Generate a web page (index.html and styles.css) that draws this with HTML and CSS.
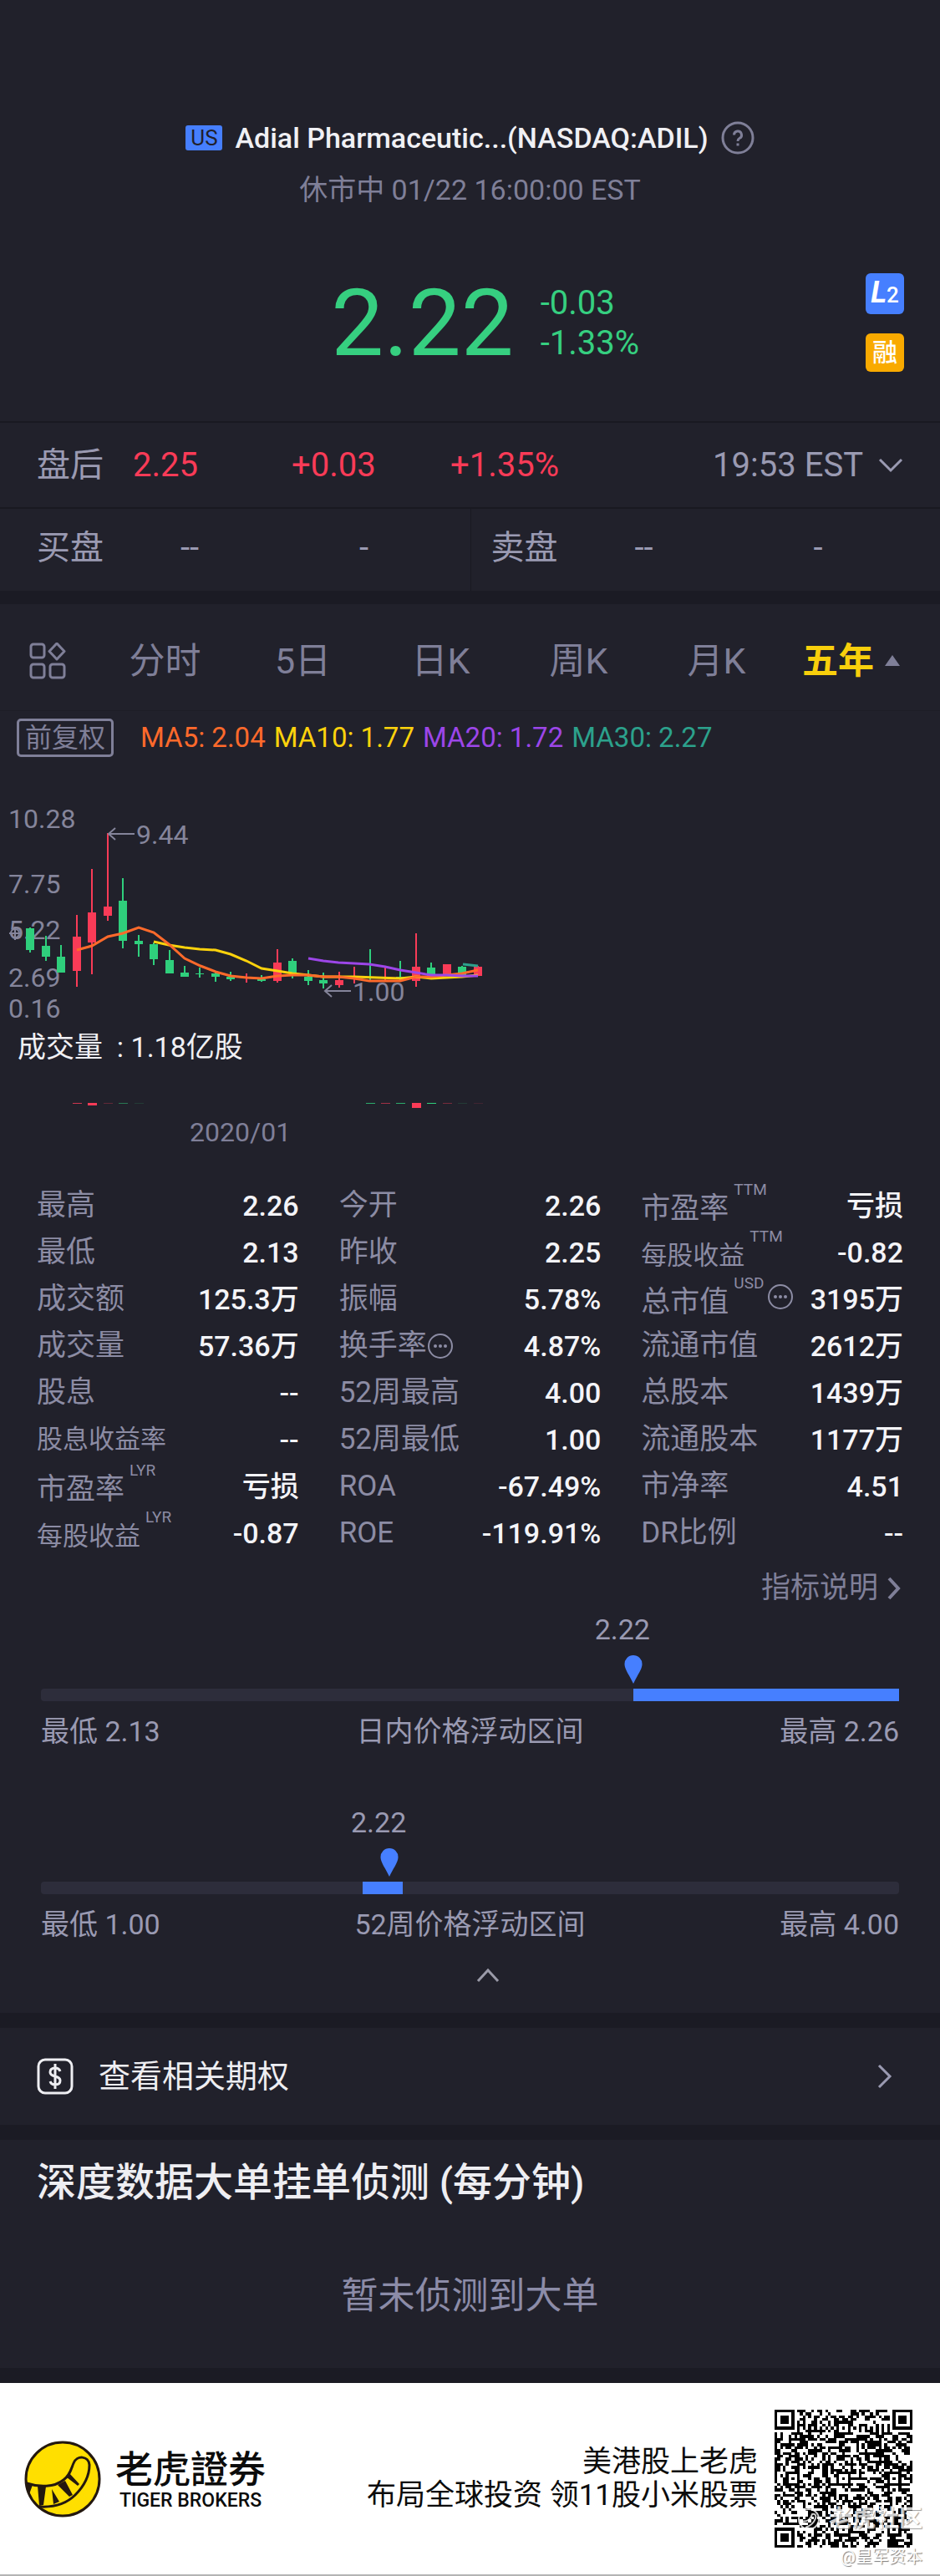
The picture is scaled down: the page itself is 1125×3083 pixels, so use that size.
FILE: index.html
```html
<!DOCTYPE html>
<html lang="zh-CN">
<head>
  <meta charset="UTF-8" />
  <meta name="viewport" content="width=device-width, initial-scale=1.0" />
  <title>ADIL - 老虎證券</title>
  <link rel="stylesheet" href="styles.css">
</head>
<body>
  <header class="quote">
    <h1 class="quote-title">
      <span class="market">US</span>
      <span>Adial Pharmaceutic...(NASDAQ:ADIL)</span>
      <button class="icon-btn" type="button" aria-label="帮助">
        <svg width="40" height="40" viewBox="0 0 40 40" fill="none" stroke="#7f7f98" stroke-width="3">
          <circle cx="20" cy="20" r="18" />
          <path d="M15.500 16.500a4.500 4.500 0 1 1 6.500 4c-1.500.8-2 1.600-2 3.500" />
          <path d="M20 26.500v3" />
        </svg>
      </button>
    </h1>
    <p class="quote-status">休市中 01/22 16:00:00 EST</p>
    <div class="price-row">
      <div class="price">2.22</div>
      <div class="change">
        <div>-0.03</div>
        <div>-1.33%</div>
      </div>
      <div class="badges">
        <span class="badge badge-l2"><i>L</i>2</span>
        <span class="badge badge-margin">融</span>
      </div>
    </div>
  </header>

  <section class="after-hours">
    <span class="label">盘后</span>
    <span class="up">2.25</span>
    <span class="up">+0.03</span>
    <span class="up">+1.35%</span>
    <button class="icon-btn after-time" type="button">
      19:53 EST
      <svg width="30" height="18" viewBox="0 0 30 18" fill="none" stroke="#9a9ab2" stroke-width="3"><path d="M2 2l13 13L28 2" /></svg>
    </button>
  </section>

  <section class="book">
    <div class="book-side"><span>买盘</span><span>--</span><span>-</span></div>
    <div class="book-side"><span>卖盘</span><span>--</span><span>-</span></div>
  </section>

  <section class="panel">
    <nav class="tabs">
      <button class="tab" type="button" aria-label="更多">
        <svg width="44" height="44" viewBox="0 0 44 44" fill="none" stroke="#7f7f98" stroke-width="3">
          <rect x="2" y="2" width="16" height="16" rx="3" />
          <path d="M33 1l9 9.500-9 9.500-9-9.500z" stroke-linejoin="round" />
          <rect x="2" y="26" width="16" height="16" rx="3" />
          <rect x="25" y="26" width="17" height="16" rx="3" />
        </svg>
      </button>
      <button class="tab" type="button">分时</button>
      <button class="tab" type="button">5日</button>
      <button class="tab" type="button">日K</button>
      <button class="tab" type="button">周K</button>
      <button class="tab" type="button">月K</button>
      <button class="tab active" type="button">
        五年
        <svg width="18" height="13" viewBox="0 0 18 13" fill="#7f7f98"><path d="M9 0l9 13H0z" /></svg>
      </button>
    </nav>

    <div class="ma-row">
      <button class="adjust" type="button">前复权</button>
      <div class="ma-list">
        <span class="ma5">MA5: 2.04</span>
        <span class="ma10">MA10: 1.77</span>
        <span class="ma20">MA20: 1.72</span>
        <span class="ma30">MA30: 2.27</span>
      </div>
    </div>

    <svg class="chart" viewBox="0 0 1125 296">
      <g class="axis">
        <text x="10" y="61">10.28</text>
        <text x="10" y="139">7.75</text>
        <text x="10" y="194">5.22</text>
        <text x="10" y="251">2.69</text>
        <text x="10" y="288">0.16</text>
        <path d="M18 179v16M11 187h14" />
        <circle cx="18" cy="187" r="5" />
      </g>
      <g id="candles"></g>
      <g class="ma-lines">
        <polyline class="ma10" points="184,197 202,201 221,204 239,206 258,207 276,212 295,220 313,229 332,232 350,235 369,237 387,239 424,239 479,241 498,239 516,241 553,239 572,237" />
        <polyline class="ma5" points="92,207 110,202 129,191 147,187 166,180 184,186 202,200 221,217 240,226 258,233 276,238 295,240 313,241 332,238 350,237 369,237 387,239 405,239 424,241 442,244 461,244 479,244 498,239 516,239 535,237 553,235 572,231" />
        <polyline class="ma20" points="369,217 387,220 405,222 424,223 442,224 461,227 479,231 498,234 516,237 535,237 553,238 572,238" />
        <polyline class="ma30" points="554,224 572,226" />
      </g>
      <g class="axis">
        <path d="M161 68h-31M138 61l-8 7 8 7M420 256h-31M397 249l-8 7 8 7" />
        <text x="163" y="80">9.44</text>
        <text x="422" y="268">1.00</text>
      </g>
    </svg>

    <p class="volume">成交量&nbsp; : 1.18亿股</p>
    <svg class="volume-chart" viewBox="0 0 1125 12"><g id="volumes"></g></svg>
    <p class="chart-date">2020/01</p>

    <div class="stats">
      <dl>
        <div><dt>最高</dt><dd>2.26</dd></div>
        <div><dt>最低</dt><dd>2.13</dd></div>
        <div><dt>成交额</dt><dd>125.3万</dd></div>
        <div><dt>成交量</dt><dd>57.36万</dd></div>
        <div><dt>股息</dt><dd>--</dd></div>
        <div><dt class="small">股息收益率</dt><dd>--</dd></div>
        <div><dt class="noted">市盈率<sup>LYR</sup></dt><dd>亏损</dd></div>
        <div><dt class="noted small">每股收益<sup>LYR</sup></dt><dd>-0.87</dd></div>
      </dl>
      <dl>
        <div><dt>今开</dt><dd>2.26</dd></div>
        <div><dt>昨收</dt><dd>2.25</dd></div>
        <div><dt>振幅</dt><dd>5.78%</dd></div>
        <div>
          <dt>换手率<svg class="more" viewBox="0 0 32 32"><circle class="ring" cx="16" cy="16" r="14" /><circle cx="10" cy="16" r="2" /><circle cx="16" cy="16" r="2" /><circle cx="22" cy="16" r="2" /></svg></dt>
          <dd>4.87%</dd>
        </div>
        <div><dt>52周最高</dt><dd>4.00</dd></div>
        <div><dt>52周最低</dt><dd>1.00</dd></div>
        <div><dt>ROA</dt><dd>-67.49%</dd></div>
        <div><dt>ROE</dt><dd>-119.91%</dd></div>
      </dl>
      <dl>
        <div><dt class="noted">市盈率<sup>TTM</sup></dt><dd>亏损</dd></div>
        <div><dt class="noted small">每股收益<sup>TTM</sup></dt><dd>-0.82</dd></div>
        <div>
          <dt class="noted">总市值<sup>USD</sup><svg class="more" viewBox="0 0 32 32"><circle class="ring" cx="16" cy="16" r="14" /><circle cx="10" cy="16" r="2" /><circle cx="16" cy="16" r="2" /><circle cx="22" cy="16" r="2" /></svg></dt>
          <dd>3195万</dd>
        </div>
        <div><dt>流通市值</dt><dd>2612万</dd></div>
        <div><dt>总股本</dt><dd>1439万</dd></div>
        <div><dt>流通股本</dt><dd>1177万</dd></div>
        <div><dt>市净率</dt><dd>4.51</dd></div>
        <div><dt>DR比例</dt><dd>--</dd></div>
      </dl>
    </div>

    <a class="explain" href="#">
      指标说明
      <svg width="18" height="28" viewBox="0 0 18 28" fill="none" stroke="#7f7f98" stroke-width="4"><path d="M3 2l11 12L3 26" /></svg>
    </a>

    <div class="range">
      <div class="range-track">
        <span class="range-fill" style="left: 69%; width: 31%"></span>
        <span class="range-value" style="left: 69%">2.22</span>
        <svg class="range-pin" style="left: 69%" viewBox="0 0 22 34"><path d="M11 0a10.500 10.500 0 0 1 10.500 11C21.500 17 15 25 11 34 7 25 .5 17 .5 11A10.500 10.500 0 0 1 11 0z" /></svg>
      </div>
      <div class="range-labels"><span>最低 2.13</span><span>日内价格浮动区间</span><span>最高 2.26</span></div>
    </div>

    <div class="range">
      <div class="range-track">
        <span class="range-fill" style="left: 37.5%; width: 4.7%"></span>
        <span class="range-value" style="left: 40.6%">2.22</span>
        <svg class="range-pin" style="left: 40.6%" viewBox="0 0 22 34"><path d="M11 0a10.500 10.500 0 0 1 10.500 11C21.500 17 15 25 11 34 7 25 .5 17 .5 11A10.500 10.500 0 0 1 11 0z" /></svg>
      </div>
      <div class="range-labels"><span>最低 1.00</span><span>52周价格浮动区间</span><span>最高 4.00</span></div>
    </div>

    <button class="icon-btn collapse" type="button" aria-label="收起">
      <svg width="28" height="18" viewBox="0 0 28 18" fill="none" stroke="#9a9aa8" stroke-width="3"><path d="M2 16L14 3l12 13" /></svg>
    </button>
  </section>

  <a class="panel options" href="#">
    <svg width="44" height="44" viewBox="0 0 44 44" fill="none" stroke="#eeeef2" stroke-width="3">
      <rect x="2" y="2" width="40" height="40" rx="8" />
      <path d="M28 16c-1-3-3-4-6-4-4 0-6 2-6 5 0 7 12 3 12 10 0 3-2 5-6 5-3 0-5-1-6-4M22 7v30" />
    </svg>
    <span>查看相关期权</span>
    <svg class="arrow" width="18" height="30" viewBox="0 0 18 30" fill="none" stroke="#9a9ab2" stroke-width="3"><path d="M2 2l13 13L2 28" /></svg>
  </a>

  <section class="panel detect">
    <h2>深度数据大单挂单侦测 (每分钟)</h2>
    <p>暂未侦测到大单</p>
  </section>

  <footer class="footer">
    <svg class="logo" viewBox="0 0 92 92">
      <circle cx="46" cy="46" r="44" fill="#ffdf00" />
      <path d="M3 51C18 56 36 56 47 47c8-6 9-13 12-20 4-10 18-9 19 2 0 12-6 25-17 36C50 76 35 80 18 79" fill="none" stroke="#23180f" stroke-width="3" />
      <path d="M2 49l8 4-4 11zM16 54l10 1-3 22-5 1zM33 58l9 15-7 3zM40 53l9-5 9 17-4 2zM54 39l12 13-2 2-13-10z" fill="#23180f" />
      <circle cx="46" cy="46" r="44" fill="none" stroke="#23180f" stroke-width="3" />
    </svg>
    <div class="brand">
      <div class="brand-cn" lang="zh-TW">老虎證券</div>
      <div class="brand-en">TIGER BROKERS</div>
    </div>
    <p class="slogan">美港股上老虎<br>布局全球投资 领11股小米股票</p>
    <div class="qr">
      <svg viewBox="0 0 49 49" shape-rendering="crispEdges"><path id="qrPath" /></svg>
      <div class="community">
        <svg width="28" height="28" viewBox="0 0 28 28" fill="none" stroke="#ffffff" stroke-width="2"><circle cx="14" cy="14" r="12" /><path d="M3 16c8 2 13-1 15-8 4-1 5 2 4 5-2 6-6 9-12 11" /></svg>
        老虎社区
      </div>
      <div class="author">@皇军资本</div>
    </div>
  </footer>
  <script src="script.js"></script>
</body>
</html>
```
FILE: styles.css
```css
* {
  box-sizing: border-box;
}

body {
  margin: 0;
  background: #1b1b24;
  color: #9a9ab2;
  font-family: Roboto, "Noto Sans CJK SC", sans-serif;
  font-size: 34px;
  line-height: 48px;
}

h1, h2, p, dl, dd {
  margin: 0;
  font-weight: normal;
}

button {
  padding: 0;
  border: none;
  background: none;
  color: inherit;
  font: inherit;
  cursor: pointer;
}

a {
  color: inherit;
  text-decoration: none;
}

svg {
  display: block;
  flex-shrink: 0;
}

/* quote header */
.quote {
  padding: 141px 43px 57px;
  background: #21212b;
  border-bottom: 2px solid #191921;
}

.quote-title {
  display: flex;
  justify-content: center;
  align-items: center;
  gap: 15px;
  color: #f0f0f4;
  font-size: 34px;
  font-weight: 500;
}

.market {
  width: 44px;
  border-radius: 3px;
  background: #467fff;
  color: #21212b;
  font-size: 26px;
  font-weight: normal;
  line-height: 30px;
  text-align: center;
}

.quote-status {
  margin-top: 14px;
  color: #7f7f98;
  text-align: center;
}

.price-row {
  display: grid;
  grid-template-columns: auto 1fr auto;
  align-items: center;
  gap: 32px;
  margin-top: 76px;
  padding-left: 34%;
  color: #36cf80;
}

.price {
  font-size: 112px;
  line-height: 120px;
}

.change {
  font-size: 40px;
}

.badges {
  display: grid;
  align-self: start;
  gap: 23px;
}

.badge {
  width: 46px;
  border-radius: 6px;
  color: #ffffff;
  font-size: 30px;
  font-weight: 500;
  line-height: 46px;
  text-align: center;
}

.badge-l2 {
  background: #467fff;
  font-size: 26px;
}

.badge-l2 i {
  font-size: 36px;
  font-weight: bold;
}

.badge-margin {
  background: #f9aa00;
}

/* after hours and order book */
.after-hours {
  display: grid;
  grid-template-columns: 115px 190px 190px 1fr auto;
  align-items: center;
  height: 101px;
  padding: 0 44px;
  background: #21212b;
  font-size: 40px;
}

.up {
  color: #f93b57;
}

.icon-btn {
  display: flex;
  align-items: center;
}

.after-time {
  gap: 18px;
}

.book {
  display: grid;
  grid-template-columns: 1fr 1fr;
  border-top: 2px solid #191921;
  background: #21212b;
  font-size: 40px;
}

.book-side {
  display: grid;
  grid-template-columns: 172px 214px 1fr;
  padding: 23px 0 27px 44px;
}

.book-side + .book-side {
  padding-left: 24px;
  border-left: 1px solid #191921;
}

.panel {
  display: block;
  margin-top: 16px;
  background: #21212b;
}

.panel + .panel {
  margin-top: 18px;
}

/* chart */
.tabs {
  display: grid;
  grid-template-columns: 80px repeat(5, 1fr) 137px;
  align-items: center;
  height: 128px;
  padding: 8px 48px 0 35px;
  border-bottom: 1px solid #1d1d26;
  color: #7f7f98;
  font-size: 43px;
}

.tab.active {
  display: flex;
  justify-content: flex-end;
  align-items: center;
  gap: 13px;
  color: #f8cf0c;
  font-weight: bold;
}

.ma-row {
  display: flex;
  align-items: center;
  gap: 32px;
  padding: 8px 20px 0;
}

.adjust {
  width: 116px;
  border: 3px solid #7f7f98;
  border-radius: 5px;
  color: #7f7f98;
  font-size: 32px;
  line-height: 40px;
}

.ma-list {
  display: flex;
  gap: 10px;
  font-size: 33px;
}

.ma5 {
  color: #ff6a2b;
  stroke: #ff6a2b;
}

.ma10 {
  color: #fcd20c;
  stroke: #fcd20c;
}

.ma20 {
  color: #9c46e8;
  stroke: #9c46e8;
}

.ma30 {
  color: #2ca18c;
  stroke: #2ca18c;
}

/* keeps the strokes off the legend text */
.ma-list span {
  stroke: none;
}

.chart {
  width: 100%;
  margin-top: 23px;
}

.axis text {
  fill: #85859b;
  font-size: 32px;
}

.axis path,
.axis circle {
  fill: none;
  stroke: #85859b;
  stroke-width: 2;
}

.ma-lines polyline {
  fill: none;
  stroke-width: 3;
}

.volume {
  margin-top: 3px;
  padding-left: 21px;
  color: #f0f0f4;
}

.volume-chart {
  width: 100%;
  margin-top: 42px;
}

.chart-date {
  padding-left: 227px;
  color: #7f7f98;
  font-size: 32px;
}

/* key figures */
.stats {
  display: grid;
  grid-template-columns: 1fr 1fr 1fr;
  gap: 48px;
  padding: 36px 44px 0;
  font-size: 35px;
}

.stats dl > div {
  display: flex;
  justify-content: space-between;
  align-items: center;
  height: 56px;
}

.stats dt {
  display: flex;
  align-items: center;
  color: #8c8ca4;
}

.stats dt.small {
  font-size: 31px;
}

.stats dt.noted {
  padding-top: 8px;
}

.stats sup {
  align-self: flex-start;
  margin: -23px 0 0 6px;
  font-size: 19px;
}

.stats dd {
  color: #f4f4f8;
  font-size: 34px;
  font-weight: 500;
}

.more {
  width: 32px;
  height: 32px;
  fill: #8c8ca4;
}

.noted .more {
  margin: 0 0 14px 4px;
}

.more .ring {
  fill: none;
  stroke: #8c8ca4;
  stroke-width: 2;
}

.explain {
  display: flex;
  justify-content: flex-end;
  align-items: center;
  gap: 10px;
  margin-top: 14px;
  padding-right: 46px;
  color: #7f7f98;
  font-size: 35px;
}

/* price ranges */
.range {
  padding: 96px 49px 0;
}

.range + .range {
  padding-top: 156px;
}

.range-track {
  position: relative;
  height: 15px;
  border-radius: 4px;
  background: #2d2d3b;
}

.range-fill {
  position: absolute;
  top: 0;
  height: 15px;
  background: #467fff;
}

.range-value {
  position: absolute;
  bottom: 62px;
  margin-left: -46px;
}

.range-pin {
  position: absolute;
  bottom: 21px;
  width: 22px;
  margin-left: -11px;
  fill: #467fff;
}

.range-labels {
  display: flex;
  justify-content: space-between;
  margin-top: 12px;
}

.collapse {
  margin: 28px auto 0;
  padding: 0 0 36px 42px;
}

/* related options */
.options {
  display: flex;
  align-items: center;
  gap: 30px;
  height: 116px;
  padding: 0 57px 0 44px;
  color: #eeeef2;
  font-size: 38px;
}

.options .arrow {
  margin-left: auto;
}

.detect {
  padding: 19px 44px 56px;
}

.detect h2 {
  color: #eeeef2;
  font-size: 47px;
  font-weight: 500;
  line-height: 64px;
}

.detect p {
  margin-top: 74px;
  color: #8c8ca8;
  font-size: 44px;
  line-height: 60px;
  text-align: center;
}

/* footer */
.footer {
  display: flex;
  align-items: center;
  height: 231px;
  margin-top: 18px;
  padding: 0 33px 0 29px;
  border-bottom: 2px solid #b4b4b4;
  background: #ffffff;
  color: #0c0c0c;
}

.logo {
  width: 92px;
  height: 92px;
}

.brand {
  margin-left: 17px;
  text-align: center;
}

.brand-cn {
  font-family: "Noto Sans CJK TC", sans-serif;
  font-size: 45px;
  font-weight: 500;
  line-height: 52px;
}

.brand-en {
  font-size: 23px;
  font-weight: 500;
  line-height: 28px;
}

.slogan {
  margin-left: auto;
  font-size: 35px;
  line-height: 40px;
  text-align: right;
}

.qr {
  position: relative;
  width: 165px;
  margin-left: 20px;
}

/* watermark over the code */
.community {
  position: absolute;
  right: -12px;
  bottom: 18px;
  display: flex;
  align-items: center;
  gap: 10px;
  color: #ffffff;
  font-size: 28px;
  font-weight: bold;
  line-height: 32px;
  white-space: nowrap;
  text-shadow: 1px 1px 1px #888888;
  opacity: 0.8;
}

.author {
  position: absolute;
  right: -12px;
  bottom: -23px;
  color: #ffffff;
  font-size: 20px;
  line-height: 24px;
  white-space: nowrap;
  text-shadow: 1px 1px 1px #777777;
}
```
FILE: script.js
```javascript
const UP = "#f93b57";
const DOWN = "#2fcf7c";

// [color, body top, body bottom, wick top, wick bottom]
const candles = [
  [DOWN, 181, 207, 180, 210],
  [DOWN, 202, 215, 190, 220],
  [DOWN, 215, 234, 201, 234],
  [UP, 191, 232, 165, 251],
  [UP, 162, 198, 110, 236],
  [UP, 155, 166, 67, 172],
  [DOWN, 148, 196, 121, 205],
  [DOWN, 196, 200, 189, 215],
  [DOWN, 200, 218, 198, 225],
  [DOWN, 219, 235, 207, 235],
  [DOWN, 234, 239, 226, 239],
  [DOWN, 235, 236, 228, 240],
  [DOWN, 235, 239, 233, 245],
  [DOWN, 239, 242, 233, 244],
  [UP, 239, 240, 235, 246],
  [DOWN, 242, 244, 237, 245],
  [UP, 222, 244, 206, 246],
  [DOWN, 220, 235, 217, 241],
  [DOWN, 239, 244, 231, 249],
  [DOWN, 243, 247, 234, 253],
  [UP, 243, 249, 233, 252],
  [UP, 238, 239, 227, 247],
  [DOWN, 239, 240, 206, 245],
  [UP, 239, 240, 226, 243],
  [DOWN, 239, 240, 220, 243],
  [UP, 227, 244, 187, 251],
  [DOWN, 228, 239, 222, 240],
  [UP, 224, 237, 224, 237],
  [DOWN, 227, 237, 226, 237],
  [UP, 227, 238, 226, 238]
];

const candleX = (i) => Math.round(36.4 + i * 18.46);

document.getElementById("candles").innerHTML = candles.map(([color, top, bottom, high, low], i) => {
  const x = candleX(i);
  return `<rect x="${x - 5}" y="${top}" width="10" height="${bottom - top}" fill="${color}" />` +
    `<rect x="${x - 1}" y="${high}" width="2" height="${low - high}" fill="${color}" />`;
}).join("");

// [candle index, color, height, opacity]
const volumes = [
  [3, UP, 1, 0.8], [4, UP, 3, 1], [5, UP, 1, 0.3], [6, DOWN, 1, 0.5], [7, DOWN, 1, 0.15],
  [22, DOWN, 1, 0.8], [23, UP, 1, 0.6], [24, DOWN, 1, 0.8], [25, UP, 6, 1], [26, DOWN, 1, 1],
  [27, UP, 1, 0.4], [28, DOWN, 1, 0.15], [29, UP, 1, 0.15]
];

document.getElementById("volumes").innerHTML = volumes.map(([i, color, height, opacity]) =>
  `<rect x="${candleX(i) - 5}" y="1" width="11" height="${height}" fill="${color}" opacity="${opacity}" />`
).join("");

// QR code, 49 x 49 modules
const SIZE = 49;
let seed = 2020;

function random() {
  seed = (seed * 1103515245 + 12345) % 2147483648;
  return seed / 2147483648;
}

function ring(x, y, cx, cy) {
  return Math.max(Math.abs(x - cx), Math.abs(y - cy));
}

function isDark(x, y) {
  for (const [cx, cy] of [[3, 3], [45, 3], [3, 45]]) {
    const d = ring(x, y, cx, cy);
    if (d <= 4) return d !== 2 && d !== 4;
  }
  for (const [cx, cy] of [[24, 6], [6, 24], [24, 24], [42, 24], [24, 42], [42, 42]]) {
    const d = ring(x, y, cx, cy);
    if (d <= 2) return d !== 1;
  }
  if (x === 6 || y === 6) return (x + y) % 2 === 0;
  return random() < 0.52;
}

let path = "";
for (let y = 0; y < SIZE; y++) {
  for (let x = 0; x < SIZE; x++) {
    if (isDark(x, y)) path += `M${x} ${y}h1v1h-1z`;
  }
}
document.getElementById("qrPath").setAttribute("d", path);
```
